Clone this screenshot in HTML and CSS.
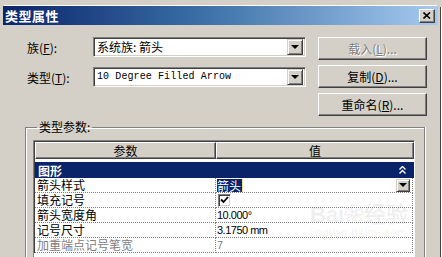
FILE: index.html
```html
<!DOCTYPE html>
<html lang="zh-CN">
<head>
  <meta charset="UTF-8" />
  <title>类型属性</title>
  <link rel="stylesheet" href="styles.css">
</head>
<body>
  <div class="screen">
    <div class="dialog">
      <div class="titlebar">
        <span class="title">类型属性</span>
        <span class="close">
          <svg width="8" height="7" viewBox="0 0 8 7"><path d="M0.5 0.5 L7 6.5 M7 0.5 L0.5 6.5" stroke="#000" stroke-width="1.6"/></svg>
        </span>
      </div>

      <div class="top">
        <div class="fields">
          <div class="field">
            <label>族(<u>F</u>):</label>
            <div class="combo">
              <span class="combo-text">系统族: 箭头</span>
              <span class="drop"><i class="tri"></i></span>
            </div>
          </div>
          <div class="field">
            <label>类型(<u>T</u>):</label>
            <div class="combo">
              <span class="combo-text mono">10 Degree Filled Arrow</span>
              <span class="drop"><i class="tri"></i></span>
            </div>
          </div>
        </div>
        <div class="buttons">
          <button class="btn disabled">载入(<u>L</u>)...</button>
          <button class="btn">复制(<u>D</u>)...</button>
          <button class="btn">重命名(<u>R</u>)...</button>
        </div>
      </div>

      <fieldset class="group">
        <legend>类型参数:</legend>
        <div class="params">
          <div class="params-inner">
            <div class="head">参数</div>
            <div class="head">值</div>

            <div class="section">
              <span>图形</span>
              <svg width="7" height="8" viewBox="0 0 7 8"><path d="M0.5 3.5 L3.5 0.5 L6.5 3.5 M0.5 7.5 L3.5 4.5 L6.5 7.5" fill="none" stroke="#fff" stroke-width="1.4"/></svg>
            </div>

            <div class="name">箭头样式</div>
            <div class="value">
              <span class="sel">箭头</span>
              <span class="drop small"><i class="tri"></i></span>
            </div>

            <div class="name">填充记号</div>
            <div class="value">
              <span class="check">
                <svg width="9" height="8" viewBox="0 0 9 8"><path d="M1 3.5 L3.5 6 L8 1" fill="none" stroke="#000" stroke-width="1.8"/></svg>
              </span>
            </div>

            <div class="name">箭头宽度角</div>
            <div class="value num">10.000°</div>

            <div class="name">记号尺寸</div>
            <div class="value num">3.1750 mm</div>

            <div class="name off">加重端点记号笔宽</div>
            <div class="value num off">7</div>
          </div>
          <div class="watermark">
            <span class="wm-big">Bai<b>❀</b>经验</span>
            <span class="wm-url">jingyan.baidu.com</span>
          </div>
        </div>
      </fieldset>
    </div>

    <div class="behind">
      <i class="mark m1"></i>
      <i class="mark m2"></i>
      <i class="mark m3"></i>
      <i class="mark m4"></i>
    </div>
  </div>
</body>
</html>
```

FILE: styles.css
```css
/* Windows classic dialog */
body {
  margin: 0;
  font-family: "Noto Sans CJK SC", "Liberation Sans", sans-serif;
  font-size: 12px;
  color: #000;
}

.screen {
  width: 442px;
  height: 257px;
  display: flex;
  background: #d4d0c8;
  overflow: hidden;
}

.dialog {
  width: 440px;
  flex: none;
  padding-top: 5px;
}

.titlebar {
  height: 19px;
  margin: 1px 2px 0 3px;
  padding: 0 3px 0 2px;
  display: flex;
  align-items: center;
  justify-content: space-between;
  background: linear-gradient(to right, #0a246a 0%, #3a6ea5 45%, #a6caf0 100%);
  box-shadow: 0 -2px 0 -1px #fff;
}

.title {
  color: #fff;
  font-weight: bold;
  font-size: 13px;
  letter-spacing: 0.5px;
  line-height: 19px;
}

.close {
  width: 16px;
  height: 14px;
  box-sizing: border-box;
  display: flex;
  align-items: center;
  justify-content: center;
  background: #d4d0c8;
  border: 1px solid;
  border-color: #fff #404040 #404040 #fff;
  box-shadow: inset -1px -1px 0 #808080;
}

.top {
  display: flex;
  padding: 12px 0 0 27px;
}

.fields {
  width: 279px;
  display: flex;
  flex-direction: column;
  gap: 10px;
}

.field {
  display: flex;
  align-items: center;
  height: 20px;
}

.field label {
  width: 66px;
}

.combo {
  width: 213px;
  height: 20px;
  box-sizing: border-box;
  display: flex;
  align-items: center;
  background: #fff;
  border: 1px solid;
  border-color: #808080 #fff #fff #808080;
  box-shadow: inset 1px 1px 0 #404040, inset -1px -1px 0 #d4d0c8;
  padding: 1px 2px 1px 3px;
}

.combo-text {
  flex: 1;
  line-height: 16px;
}

.mono {
  font-family: "Liberation Mono", monospace;
  font-size: 10px;
  letter-spacing: 0.1px;
}

.drop {
  width: 16px;
  height: 16px;
  box-sizing: border-box;
  display: flex;
  align-items: center;
  justify-content: center;
  background: #d4d0c8;
  border: 1px solid;
  border-color: #d4d0c8 #404040 #404040 #d4d0c8;
  box-shadow: inset 1px 1px 0 #fff, inset -1px -1px 0 #808080;
}

.drop.small {
  width: 14px;
  height: 13px;
  margin-left: auto;
  margin-right: 2px;
}

.tri {
  width: 0;
  height: 0;
  border-left: 4px solid transparent;
  border-right: 4px solid transparent;
  border-top: 4px solid #000;
}

.buttons {
  margin-left: 12px;
  display: flex;
  flex-direction: column;
  gap: 5px;
}

.btn {
  width: 109px;
  height: 23px;
  padding: 0;
  font: inherit;
  background: #d4d0c8;
  border: 1px solid;
  border-color: #fff #404040 #404040 #fff;
  box-shadow: inset -1px -1px 0 #808080;
  color: #000;
}

.btn.disabled {
  color: #808080;
  text-shadow: 1px 1px 0 #fff;
}

.group {
  margin: 4px 0 0 25px;
  padding: 6px 0 0 7px;
  width: 400px;
  box-sizing: border-box;
  border: 1px solid #808080;
  border-bottom: none;
  box-shadow: inset 1px 1px 0 #fff, 1px 0 0 #fff;
  min-inline-size: 0;
}

.group legend {
  margin-left: 4px;
  padding: 0 2px;
  line-height: 14px;
}

.params {
  position: relative;
  width: 382px;
  height: 140px;
  box-sizing: border-box;
  border: 1px solid;
  border-color: #808080 #fff #fff #808080;
  background: #fff;
}

.params-inner {
  display: grid;
  grid-template-columns: 181px 1fr;
  grid-template-rows: 17px 19px repeat(5, 15px);
  border-top: 1px solid #404040;
  border-left: 1px solid #404040;
}

.head {
  box-sizing: border-box;
  text-align: center;
  line-height: 15px;
  background: #d4d0c8;
  border: 1px solid;
  border-color: #fff #404040 #404040 #fff;
  box-shadow: inset -1px -1px 0 #808080;
}

.section {
  grid-column: 1 / 3;
  margin-top: 3px;
  display: flex;
  align-items: center;
  justify-content: space-between;
  padding: 0 8px 0 3px;
  background: #0a246a;
  color: #fff;
  font-weight: bold;
}

.name,
.value {
  box-sizing: border-box;
  line-height: 14px;
  border-bottom: 1px dotted #808080;
  white-space: nowrap;
}

.name {
  padding-left: 2px;
  border-right: 1px dotted #808080;
}

.value {
  display: flex;
  align-items: center;
  padding-left: 1px;
  border-right: 1px dotted #808080;
  margin-right: 1px;
}

.sel {
  background: #0a246a;
  color: #fff;
  line-height: 13px;
  padding-right: 1px;
  border-right: 1px solid #f0e0a0;
}

.check {
  width: 13px;
  height: 13px;
  box-sizing: border-box;
  margin-left: 1px;
  display: flex;
  align-items: center;
  justify-content: center;
  background: #fff;
  border: 1px solid;
  border-color: #808080 #fff #fff #808080;
  box-shadow: inset 1px 1px 0 #404040, inset -1px -1px 0 #d4d0c8;
}

.num {
  font-family: "Liberation Sans", sans-serif;
  font-size: 11px;
  letter-spacing: -0.5px;
}

.off {
  color: #808080;
}

.watermark {
  position: absolute;
  left: 276px;
  top: 62px;
  display: flex;
  flex-direction: column;
  color: rgba(0, 0, 0, 0.07);
  pointer-events: none;
}

.wm-big {
  font-family: "Liberation Sans", sans-serif;
  font-size: 22px;
  font-weight: bold;
  line-height: 24px;
}

.wm-big b {
  font-size: 20px;
}

.wm-url {
  font-family: "Liberation Sans", sans-serif;
  font-size: 12px;
  line-height: 12px;
}

.behind {
  flex: 1;
  margin-top: 7px;
  border-left: 1px solid #404040;
  background: #fff;
  display: flex;
  flex-direction: column;
}

.mark {
  height: 2px;
  background: #000;
  margin-left: 1px;
}

.m1 { margin-top: 146px; }
.m2 { margin-top: 32px; height: 14px; }
.m3 { margin-top: 16px; height: 8px; }
.m4 { margin-top: 12px; height: 14px; }
```
